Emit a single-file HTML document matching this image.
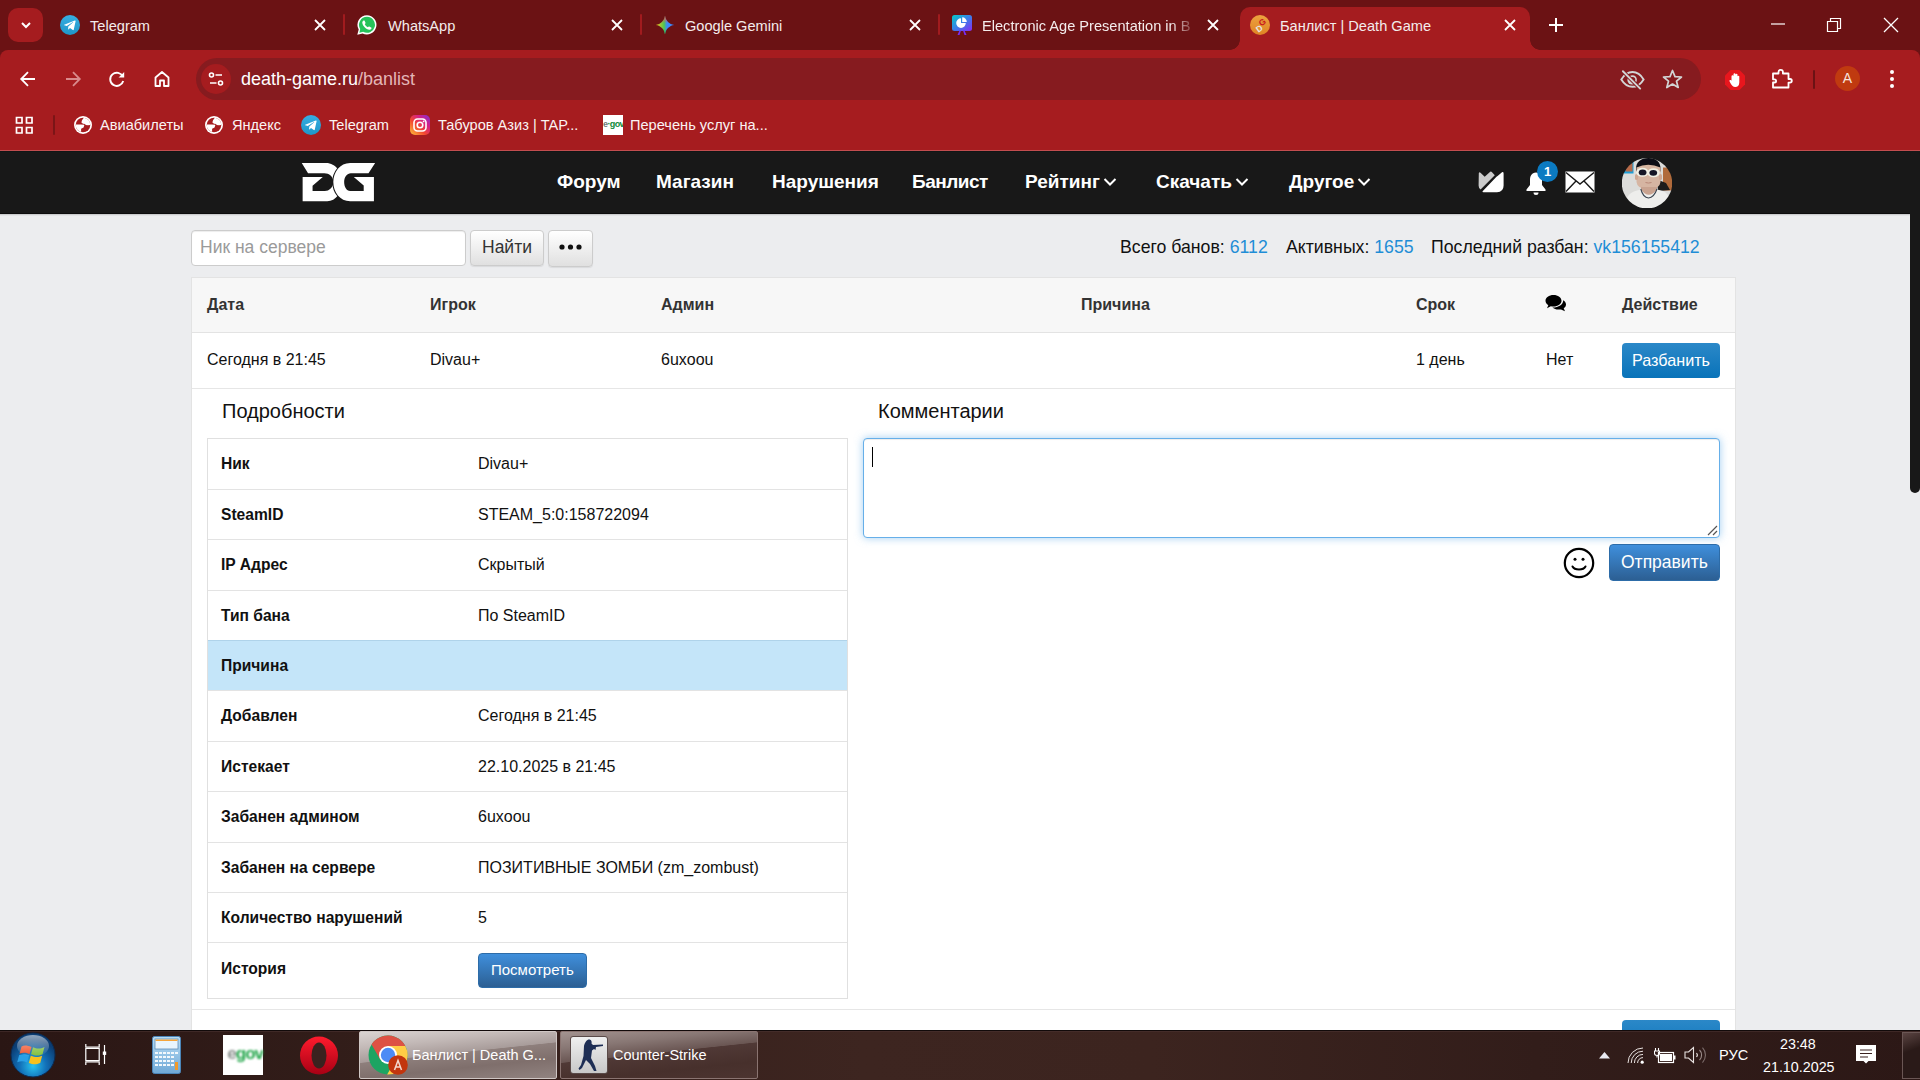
<!DOCTYPE html>
<html><head><meta charset="utf-8">
<style>
*{box-sizing:border-box;margin:0;padding:0}
html,body{width:1920px;height:1080px;overflow:hidden;background:#ECEDEF;font-family:"Liberation Sans",sans-serif}
.a{position:absolute}
.w{color:#fff}
#tabs{position:absolute;left:0;top:0;width:1920px;height:50px;background:#6B1214}
#toolbar{position:absolute;left:0;top:50px;width:1920px;height:101px;background:#A61C1F;border-radius:8px 8px 0 0;border-bottom:1px solid #C24D4F}
.tt{position:absolute;top:16px;font-size:14.6px;color:#F4ECEC;white-space:nowrap;line-height:20px}
.sep{position:absolute;top:14px;width:2px;height:21px;background:#A11B1E;border-radius:1px}
#nav{position:absolute;left:0;top:151px;width:1910px;height:63px;background:#181818;border-bottom:1px solid #0D0D0D;border-top:1px solid #111515;box-shadow:0 1px 0 #CBCCCE,0 2px 0 #E2E3E5}
.nv{position:absolute;top:170px;font-size:19px;font-weight:bold;color:#fff;white-space:nowrap;line-height:24px}
.bm{position:absolute;top:115px;font-size:14.6px;color:#FBF3F3;white-space:nowrap;line-height:20px}
#taskbar{position:absolute;left:0;top:1030px;width:1920px;height:50px;background:linear-gradient(90deg,#2A1614 0%,#331E1A 20%,#3D2520 45%,#3C241F 60%,#321D1A 80%,#2C1816 100%)}
.hd{position:absolute;top:294px;font-size:16px;font-weight:bold;color:#333;line-height:22px;white-space:nowrap}
.td{position:absolute;top:349px;font-size:16px;color:#111;line-height:22px;white-space:nowrap}
.btnb{border-radius:4px}
.lb{position:absolute;left:221px;font-size:15.6px;font-weight:bold;color:#111;line-height:22px;white-space:nowrap}
.vl{position:absolute;left:478px;font-size:16px;color:#111;line-height:22px;white-space:nowrap}
</style></head>
<body>
<!-- TAB STRIP -->
<div class="a" style="left:0;top:0;width:1920px;height:151px;background:#6B1214"></div>
<div id="tabs">
  <div class="a" style="left:8px;top:8px;width:35px;height:34px;border-radius:10px;background:#A51C1F"></div>
  <svg class="a" style="left:19px;top:18px" width="14" height="14" viewBox="0 0 14 14"><path d="M3 5 L7 9 L11 5" stroke="#fff" stroke-width="2" fill="none"/></svg>

  <svg class="a" style="left:60px;top:15px" width="20" height="20" viewBox="0 0 20 20"><defs><linearGradient id="tg" x1="0" y1="0" x2="0" y2="1"><stop offset="0" stop-color="#37AEE2"/><stop offset="1" stop-color="#1E96C8"/></linearGradient></defs><circle cx="10" cy="10" r="10" fill="url(#tg)"/><path d="M4.2 9.8L14.8 5.6C15.3 5.4 15.7 5.7 15.6 6.3L13.8 14.6C13.7 15.2 13.3 15.3 12.8 15L10 12.9L8.7 14.2C8.5 14.4 8.4 14.5 8.1 14.5L8.3 11.6L13.2 7.2C13.4 7 13.2 6.9 12.9 7.1L6.8 11L4.3 10.2C3.8 10.1 3.8 9.9 4.2 9.8Z" fill="#fff"/></svg>
  <div class="tt" style="left:90px">Telegram</div>
  <svg class="a" style="left:313px;top:18px" width="14" height="14" viewBox="0 0 14 14"><path d="M2 2L12 12M12 2L2 12" stroke="#fff" stroke-width="1.8"/></svg>
  <div class="sep" style="left:343px"></div>

  <svg class="a" style="left:356px;top:14px" width="22" height="22" viewBox="0 0 22 22"><path d="M11 1.2A9.6 9.6 0 0 0 2.7 15.6L1.3 20.8L6.6 19.4A9.6 9.6 0 1 0 11 1.2Z" fill="#fff"/><path d="M11 2.8A8 8 0 0 0 4.2 15L3.4 18.7L7.1 17.8A8 8 0 1 0 11 2.8Z" fill="#25C35A"/><path d="M7.8 6.5C8.2 6.4 8.5 6.5 8.7 6.9L9.5 8.8C9.6 9.1 9.5 9.4 9.3 9.6L8.8 10.2C9.5 11.6 10.5 12.6 11.9 13.3L12.5 12.7C12.7 12.5 13 12.4 13.3 12.6L15.1 13.4C15.5 13.6 15.6 13.9 15.5 14.3C15.2 15.3 14.3 15.9 13.3 15.8C10 15.4 6.7 12.1 6.3 8.8C6.2 7.8 6.8 6.8 7.8 6.5Z" fill="#fff"/></svg>
  <div class="tt" style="left:388px">WhatsApp</div>
  <svg class="a" style="left:610px;top:18px" width="14" height="14" viewBox="0 0 14 14"><path d="M2 2L12 12M12 2L2 12" stroke="#fff" stroke-width="1.8"/></svg>
  <div class="sep" style="left:640px"></div>

  <svg class="a" style="left:655px;top:15px" width="20" height="20" viewBox="0 0 20 20"><defs><linearGradient id="gm1" x1="0" y1="0.5" x2="1" y2="0.5"><stop offset="0" stop-color="#FFC61A"/><stop offset="0.45" stop-color="#4FC54F"/><stop offset="0.6" stop-color="#3D8BF2"/><stop offset="1" stop-color="#3A86FF"/></linearGradient><linearGradient id="gm2" x1="0" y1="0" x2="0" y2="1"><stop offset="0" stop-color="#F6485A"/><stop offset="0.4" stop-color="#F6485A" stop-opacity="0"/><stop offset="0.7" stop-color="#1FC45A" stop-opacity="0"/><stop offset="1" stop-color="#1FC45A"/></linearGradient></defs><path d="M10 0.8C10.6 5.6 14.4 9.4 19.2 10C14.4 10.6 10.6 14.4 10 19.2C9.4 14.4 5.6 10.6 0.8 10C5.6 9.4 9.4 5.6 10 0.8Z" fill="url(#gm1)"/><path d="M10 0.8C10.6 5.6 14.4 9.4 19.2 10C14.4 10.6 10.6 14.4 10 19.2C9.4 14.4 5.6 10.6 0.8 10C5.6 9.4 9.4 5.6 10 0.8Z" fill="url(#gm2)"/></svg>
<div class="tt" style="left:685px">Google Gemini</div>
  <svg class="a" style="left:908px;top:18px" width="14" height="14" viewBox="0 0 14 14"><path d="M2 2L12 12M12 2L2 12" stroke="#fff" stroke-width="1.8"/></svg>
  <div class="sep" style="left:938px"></div>

  <svg class="a" style="left:951px;top:14px" width="22" height="22" viewBox="0 0 22 22"><defs><linearGradient id="ea" x1="0" y1="0" x2="1" y2="1"><stop offset="0" stop-color="#06CBC6"/><stop offset="0.5" stop-color="#3A7FE8"/><stop offset="1" stop-color="#8A2BF2"/></linearGradient></defs><rect x="1" y="1" width="20" height="16" rx="2.5" fill="url(#ea)"/><path d="M6.5 21L8.5 16.5H10L8.5 21ZM15.5 21L13.5 16.5H12L13.5 21Z" fill="#7A2CF5"/><path d="M10 4.3A4.8 4.8 0 1 0 14.8 9.1H10Z" fill="#fff"/><path d="M11.2 3.3V7.9H15.8A4.6 4.6 0 0 0 11.2 3.3Z" fill="#fff"/></svg>
<div class="tt" style="left:982px;width:215px;overflow:hidden;-webkit-mask-image:linear-gradient(90deg,#000 88%,transparent 100%)">Electronic Age Presentation in B</div>
  <svg class="a" style="left:1206px;top:18px" width="14" height="14" viewBox="0 0 14 14"><path d="M2 2L12 12M12 2L2 12" stroke="#fff" stroke-width="1.8"/></svg>

  <!-- active tab -->
  <div class="a" style="left:1240px;top:7px;width:290px;height:43px;background:#A51C1F;border-radius:10px 10px 0 0"></div>
<div class="a" style="left:1230px;top:40px;width:10px;height:10px;background:radial-gradient(circle at 0 0,transparent 9.5px,#A51C1F 10px)"></div>
<div class="a" style="left:1530px;top:40px;width:10px;height:10px;background:radial-gradient(circle at 100% 0,transparent 9.5px,#A51C1F 10px)"></div>
  <svg class="a" style="left:1250px;top:15px" width="20" height="20" viewBox="0 0 20 20"><defs><linearGradient id="dgf" x1="0" y1="0" x2="0" y2="1"><stop offset="0" stop-color="#EDA23F"/><stop offset="1" stop-color="#DF8424"/></linearGradient></defs><circle cx="10" cy="10" r="10" fill="url(#dgf)"/><g transform="rotate(-35 10 10)"><text x="4.2" y="15.5" font-family="Liberation Sans" font-weight="bold" font-size="8.5" fill="#E6E6E6">D</text><text x="10.2" y="12" font-family="Liberation Sans" font-weight="bold" font-size="8.5" fill="#C8171D">G</text></g></svg>
  <div class="tt" style="left:1280px">Банлист | Death Game</div>
  <svg class="a" style="left:1503px;top:18px" width="14" height="14" viewBox="0 0 14 14"><path d="M2 2L12 12M12 2L2 12" stroke="#fff" stroke-width="1.8"/></svg>
  <svg class="a" style="left:1547px;top:16px" width="18" height="18" viewBox="0 0 18 18"><path d="M9 2V16M2 9H16" stroke="#fff" stroke-width="2"/></svg>

  <svg class="a" style="left:1770px;top:18px" width="16" height="14"><path d="M1 6H15" stroke="#fff" stroke-width="1.2"/></svg>
  <svg class="a" style="left:1826px;top:17px" width="16" height="16"><path d="M1.5 4.5H11.5V14.5H1.5Z M4.5 4.5V1.5H14.5V11.5H11.5" stroke="#fff" stroke-width="1.2" fill="none"/></svg>
  <svg class="a" style="left:1883px;top:17px" width="16" height="16"><path d="M1 1L15 15M15 1L1 15" stroke="#fff" stroke-width="1.3"/></svg>
</div>

<!-- TOOLBAR + BOOKMARKS -->
<div id="toolbar"></div>
<!-- Omnibox -->
<div class="a" style="left:196px;top:58px;width:1505px;height:42px;border-radius:21px;background:#861B1F"></div>

<!-- toolbar icons -->
<svg class="a" style="left:18px;top:69px" width="20" height="20" viewBox="0 0 20 20"><path d="M17 10H3.5M10 3.2L3.2 10L10 16.8" stroke="#fff" stroke-width="1.8" fill="none"/></svg>
<svg class="a" style="left:63px;top:69px" width="20" height="20" viewBox="0 0 20 20"><path d="M3 10H16.5M10 3.2L16.8 10L10 16.8" stroke="#D98A8C" stroke-width="1.8" fill="none"/></svg>
<svg class="a" style="left:107px;top:69px" width="20" height="20" viewBox="0 0 20 20"><path d="M15.8 7.5A6.6 6.6 0 1 0 16.2 12" stroke="#fff" stroke-width="1.9" fill="none"/><path d="M17.2 3V8.6H11.6Z" fill="#fff"/></svg>
<svg class="a" style="left:152px;top:69px" width="20" height="20" viewBox="0 0 20 20"><path d="M3.5 17V8.5L10 3L16.5 8.5V17H12V11.5H8V17Z" stroke="#fff" stroke-width="1.8" fill="none" stroke-linejoin="round"/></svg>
<!-- site info -->
<div class="a" style="left:201px;top:64px;width:30px;height:30px;border-radius:50%;background:#A51C1F"></div>
<svg class="a" style="left:206px;top:69px" width="20" height="20" viewBox="0 0 20 20"><circle cx="5.5" cy="6" r="2" stroke="#fff" stroke-width="1.6" fill="none"/><path d="M9.5 6H16M4 14H10.5" stroke="#fff" stroke-width="1.6"/><circle cx="14.5" cy="14" r="2" stroke="#fff" stroke-width="1.6" fill="none"/></svg>
<div class="a" style="left:241px;top:68px;font-size:18px;line-height:22px;color:#fff;white-space:nowrap">death-game.ru<span style="color:#E3B6B7">/banlist</span></div>
<!-- eye slash -->
<svg class="a" style="left:1610px;top:60px" width="45" height="40" viewBox="0 0 45 40"><defs><clipPath id="eyl"><path d="M0 0H1.65L41.65 40H0Z"/></clipPath><clipPath id="eyr"><path d="M1.65 0H45V40H41.65Z"/></clipPath></defs><path d="M11.3 19.4C14.5 14.2 18 12 22.5 12S30.5 14.2 33.6 19.4C30.5 24.6 27 26.8 22.5 26.8S14.5 24.6 11.3 19.4Z" stroke="#D2D5D5" stroke-width="1.9" fill="none"/><circle cx="22" cy="20" r="4.6" fill="#D2D5D5" clip-path="url(#eyl)"/><circle cx="22.5" cy="19.7" r="3.6" stroke="#D2D5D5" stroke-width="1.6" fill="none" clip-path="url(#eyr)"/><path d="M12.9 11.25L30.2 28.6" stroke="#861B1F" stroke-width="3.8"/><path d="M12.9 11.25L30.2 28.6" stroke="#D2D5D5" stroke-width="1.9" stroke-linecap="round"/></svg>
<svg class="a" style="left:1662px;top:69px" width="21" height="20" viewBox="0 0 21 20"><path d="M10.5 1.5L13 7.6L19.5 8L14.5 12.2L16.2 18.5L10.5 15L4.8 18.5L6.5 12.2L1.5 8L8 7.6Z" stroke="#D2D5D5" stroke-width="1.7" fill="none" stroke-linejoin="round"/></svg>
<!-- adblock -->
<svg class="a" style="left:1724px;top:69px" width="22" height="22" viewBox="0 0 22 22"><path d="M6.5 1H15.5L21 6.5V15.5L15.5 21H6.5L1 15.5V6.5Z" fill="#E8161D"/><path d="M7.5 12V7.3a1 1 0 0 1 2 0V11V5.3a1 1 0 0 1 2 0V11V5.8a1 1 0 0 1 2 0V11V7.3a1 1 0 0 1 1.8 0V13.5C15.3 16.5 13.6 18 11.2 18C9 18 8 16.8 6.8 14.8L5.5 12.3a1 1 0 0 1 1.7-1Z" fill="#fff"/></svg>
<svg class="a" style="left:1770px;top:68px" width="24" height="22" viewBox="0 0 24 22"><path d="M3 5.5H8.5V4a2.2 2.2 0 0 1 4.4 0V5.5H18.5V11H20a1.8 1.8 0 0 1 0 3.6H18.5V19.5H3V14.5H4.5a1.6 1.6 0 0 0 0-3.2H3Z" stroke="#fff" stroke-width="1.8" fill="none" stroke-linejoin="round"/></svg>
<div class="a" style="left:1813px;top:70px;width:2px;height:19px;background:#6B1214;border-radius:1px"></div>
<div class="a" style="left:1835px;top:66px;width:25px;height:25px;border-radius:50%;background:#C03A10;color:#F6E3DA;font-size:14px;line-height:25px;text-align:center">A</div>
<svg class="a" style="left:1886px;top:68px" width="12" height="22" viewBox="0 0 12 22"><circle cx="6" cy="4" r="2" fill="#fff"/><circle cx="6" cy="11" r="2" fill="#fff"/><circle cx="6" cy="18" r="2" fill="#fff"/></svg>

<!-- bookmarks bar -->
<svg class="a" style="left:15px;top:116px" width="19" height="19" viewBox="0 0 19 19"><path d="M1.5 1.5H7V7H1.5ZM11.5 1.5H17V7H11.5ZM1.5 11.5H7V17H1.5ZM11.5 11.5H17V17H11.5Z" stroke="#fff" stroke-width="1.7" fill="none"/></svg>
<div class="a" style="left:53px;top:115px;width:2px;height:20px;background:#7B1517;border-radius:1px"></div>
<svg class="a" style="left:68px;top:110px" width="30" height="30" viewBox="0 0 30 30"><circle cx="15" cy="15" r="9" fill="#fff"/><circle cx="15" cy="15" r="7.3" fill="#A51C1F"/><path d="M15.8 7.7L14 10.3L13.4 12.5L15 13.75L17.2 14.1L17.5 15L20 15.3L22.3 15A7.3 7.3 0 0 0 15.8 7.7Z" fill="#fff"/><path d="M7.7 14.4L12.5 14.4L16.4 14.8L15.6 17.5L13.1 18.75L13.1 22A7.3 7.3 0 0 1 7.7 14.4Z" fill="#fff"/></svg>
<div class="bm" style="left:100px">Авиабилеты</div>
<svg class="a" style="left:199px;top:110px" width="30" height="30" viewBox="0 0 30 30"><circle cx="15" cy="15" r="9" fill="#fff"/><circle cx="15" cy="15" r="7.3" fill="#A51C1F"/><path d="M15.8 7.7L14 10.3L13.4 12.5L15 13.75L17.2 14.1L17.5 15L20 15.3L22.3 15A7.3 7.3 0 0 0 15.8 7.7Z" fill="#fff"/><path d="M7.7 14.4L12.5 14.4L16.4 14.8L15.6 17.5L13.1 18.75L13.1 22A7.3 7.3 0 0 1 7.7 14.4Z" fill="#fff"/></svg>
<div class="bm" style="left:232px">Яндекс</div>
<svg class="a" style="left:301px;top:115px" width="20" height="20" viewBox="0 0 20 20"><defs><linearGradient id="tg2" x1="0" y1="0" x2="0" y2="1"><stop offset="0" stop-color="#37AEE2"/><stop offset="1" stop-color="#1E96C8"/></linearGradient></defs><circle cx="10" cy="10" r="10" fill="url(#tg2)"/><path d="M4.2 9.8L14.8 5.6C15.3 5.4 15.7 5.7 15.6 6.3L13.8 14.6C13.7 15.2 13.3 15.3 12.8 15L10 12.9L8.7 14.2C8.5 14.4 8.4 14.5 8.1 14.5L8.3 11.6L13.2 7.2C13.4 7 13.2 6.9 12.9 7.1L6.8 11L4.3 10.2C3.8 10.1 3.8 9.9 4.2 9.8Z" fill="#fff"/></svg>
<div class="bm" style="left:329px">Telegram</div>
<div class="a" style="left:410px;top:115px;width:20px;height:20px;border-radius:5px;background:linear-gradient(45deg,#FEC33B 0%,#F3472F 40%,#D21F8B 70%,#7A34D6 100%)"></div>
<svg class="a" style="left:410px;top:115px" width="20" height="20" viewBox="0 0 20 20"><rect x="4" y="4" width="12" height="12" rx="3.5" stroke="#fff" stroke-width="1.6" fill="none"/><circle cx="10" cy="10" r="2.8" stroke="#fff" stroke-width="1.6" fill="none"/><circle cx="13.6" cy="6.4" r="0.9" fill="#fff"/></svg>
<div class="bm" style="left:438px">Табуров Азиз | TAP...</div>
<div class="a" style="left:603px;top:115px;width:20px;height:20px;background:#fff"></div>
<div class="a" style="left:603px;top:119px;width:20px;font-size:9px;line-height:10px;font-weight:bold;color:#0E8A3A;text-align:right;letter-spacing:-0.6px;overflow:hidden;white-space:nowrap"><span style="color:#6F7A7A">e</span>·gov</div>
<div class="bm" style="left:630px">Перечень услуг на...</div>

<div id="nav"></div>
<!-- logo -->
<svg class="a" style="left:290px;top:150px" width="100" height="65" viewBox="0 0 1662 1080">
<path d="M195,215 L600,215 C760,215 870,380 870,530 C870,700 760,850 620,850 L210,850 L210,450 L545,450 L375,595 L375,680 L580,680 C650,680 720,620 720,530 C720,440 650,385 570,385 L300,385 Z" fill="#fff"/>
<path d="M1415,215 L1000,215 C830,215 720,370 720,530 C720,700 830,850 1000,850 L1395,850 L1395,450 L1060,450 L1225,590 L1225,680 L1000,680 C940,680 900,610 900,530 C900,450 950,385 1010,385 L1305,385 Z" fill="#fff" stroke="#181818" stroke-width="34" paint-order="stroke"/>
</svg>
<div class="nv" style="left:557px">Форум</div>
<div class="nv" style="left:656px">Магазин</div>
<div class="nv" style="left:772px">Нарушения</div>
<div class="nv" style="left:912px;letter-spacing:-0.5px">Банлист</div>
<div class="nv" style="left:1025px">Рейтинг</div>
<svg class="a" style="left:1103px;top:176px" width="14" height="12" viewBox="0 0 14 12"><path d="M1.5 3L7 8.5L12.5 3" stroke="#fff" stroke-width="2" fill="none"/></svg>
<div class="nv" style="left:1156px">Скачать</div>
<svg class="a" style="left:1235px;top:176px" width="14" height="12" viewBox="0 0 14 12"><path d="M1.5 3L7 8.5L12.5 3" stroke="#fff" stroke-width="2" fill="none"/></svg>
<div class="nv" style="left:1289px">Другое</div>
<svg class="a" style="left:1357px;top:176px" width="14" height="12" viewBox="0 0 14 12"><path d="M1.5 3L7 8.5L12.5 3" stroke="#fff" stroke-width="2" fill="none"/></svg>
<!-- nav icons -->
<svg class="a" style="left:1474px;top:166px" width="36" height="32" viewBox="0 0 36 32"><path d="M4.8 7.2Q5.3 5.6 6.5 6.8L10.7 10.8L16.2 5.8Q17 5.2 17.8 5.9L20.8 9.2L6.6 23.6Q4.6 22.5 4.6 19.5Z" fill="#CBCBCB"/><path d="M8.6 25.2L22 11.2Q22.8 10.5 23.6 10L28 6.3Q29.5 5.5 29.6 7.5V19.5Q29.6 26 23 26.2H9.5Q8 26 8.6 25.2Z" fill="#fff"/></svg>
<svg class="a" style="left:1525px;top:170px" width="22" height="26" viewBox="0 0 22 26"><path d="M11 2.5C6.5 2.5 5 6.5 5 10V15L1.5 19.5V21H20.5V19.5L17 15V10C17 6.5 15.5 2.5 11 2.5Z" fill="#fff"/><path d="M8.5 22.5a2.5 2.5 0 0 0 5 0Z" fill="#fff"/></svg>
<div class="a" style="left:1537px;top:161px;width:21px;height:21px;border-radius:50%;background:#0B7AC1;color:#fff;font-size:13px;font-weight:bold;line-height:21px;text-align:center">1</div>
<svg class="a" style="left:1565px;top:171px" width="30" height="22" viewBox="0 0 30 22"><rect x="0.5" y="0.5" width="29" height="21" fill="#fff"/><path d="M1 1.5L15 13L29 1.5M1 20.5L11 10M29 20.5L19 10" stroke="#181818" stroke-width="1.4" fill="none"/></svg>
<!-- avatar -->
<svg class="a" style="left:1622px;top:158px" width="50" height="50" viewBox="0 0 50 50">
<defs><clipPath id="av"><circle cx="25" cy="25.2" r="25.2"/></clipPath><filter id="avb"><feGaussianBlur stdDeviation="0.45"/></filter></defs>
<g clip-path="url(#av)"><g filter="url(#avb)">
<rect width="50" height="50" fill="#DCDCDA"/>
<rect x="2" y="3.5" width="9.5" height="12" fill="#1E9ED6"/>
<rect x="3.5" y="5" width="7" height="8.5" fill="#B66A4A"/>
<rect x="41" y="9.5" width="10" height="23" fill="#B06A3A"/>
<path d="M35 21.5L44 25L48 32L36 33Z" fill="#1B1B1B"/>
<path d="M14 11C14 4 18.5 0 26.5 0S38.5 4 38.5 11V13.5H14Z" fill="#0F0F12"/>
<path d="M14.5 9.5Q26 4 38.5 9.5V24Q38 31 26.5 31.5Q15 31 14.5 24Z" fill="#D6B5A2"/>
<rect x="13" y="16" width="3" height="6" rx="1.5" fill="#CFA792"/><rect x="37" y="16" width="3" height="6" rx="1.5" fill="#CFA792"/>
<path d="M19 29H35V39H19Z" fill="#C9A390"/>
<path d="M3 50C3 38 8 33.5 19 31.5Q26.5 42 35 31.5C44 33 49 37 50 50Z" fill="#EEEEEC"/>
<path d="M18.8 31Q21 39.5 26.5 40Q32 39.5 35 31" stroke="#3B4450" stroke-width="1.1" fill="none"/>
<ellipse cx="20.4" cy="14.3" rx="6.3" ry="4.5" fill="#F1EFE4"/><ellipse cx="31.6" cy="14.7" rx="6.3" ry="4.5" fill="#F1EFE4"/>
<ellipse cx="20.6" cy="14.4" rx="3.9" ry="2.9" fill="#151828"/><ellipse cx="31.3" cy="14.8" rx="3.9" ry="2.9" fill="#151828"/>
<path d="M23.5 24.5Q26.5 25.6 29.5 24.5" stroke="#B98878" stroke-width="1" fill="none"/>
</g></g></svg>
<!-- scrollbar -->
<div class="a" style="left:1910px;top:151px;width:10px;height:342px;background:#181818;border-radius:0 0 5px 5px"></div>
<div class="a" style="left:1910px;top:151px;width:10px;height:8px;background:#181818;border-radius:5px 5px 0 0"></div>

<!-- search -->
<div class="a" style="left:191px;top:230px;width:275px;height:36px;background:#fff;border:1px solid #CCCCCC;border-radius:4px;box-shadow:inset 0 1px 1px rgba(0,0,0,.075)"></div>
<div class="a" style="left:200px;top:236px;font-size:17.5px;line-height:22px;color:#9A9A9A;white-space:nowrap">Ник на сервере</div>
<div class="a" style="left:470px;top:230px;width:74px;height:36px;background:linear-gradient(#FFFFFF,#E0E0E0);border:1px solid #CCCCCC;border-radius:4px;box-shadow:0 1px 1px rgba(0,0,0,.08)"></div>
<div class="a" style="left:482px;top:236px;font-size:17.5px;line-height:22px;color:#333;white-space:nowrap">Найти</div>
<div class="a" style="left:548px;top:230px;width:45px;height:37px;background:linear-gradient(#FFFFFF,#E0E0E0);border:1px solid #CCCCCC;border-radius:4px;box-shadow:0 1px 1px rgba(0,0,0,.08)"></div>
<svg class="a" style="left:558px;top:242px" width="25" height="10" viewBox="0 0 25 10"><circle cx="4" cy="5" r="2.6" fill="#111"/><circle cx="12.5" cy="5" r="2.6" fill="#111"/><circle cx="21" cy="5" r="2.6" fill="#111"/></svg>

<!-- stats -->
<div class="a" style="left:1120px;top:236px;font-size:17.7px;line-height:22px;color:#111;white-space:nowrap">Всего банов: <span style="color:#1F8DD6">6112</span></div>
<div class="a" style="left:1286px;top:236px;font-size:17.7px;line-height:22px;color:#111;white-space:nowrap">Активных: <span style="color:#1F8DD6">1655</span></div>
<div class="a" style="left:1431px;top:236px;font-size:17.7px;line-height:22px;color:#111;white-space:nowrap">Последний разбан: <span style="color:#1F8DD6">vk156155412</span></div>

<!-- main table container -->
<div class="a" style="left:191px;top:277px;width:1545px;height:760px;background:#fff;border:1px solid #E3E3E3"></div>
<div class="a" style="left:192px;top:278px;width:1543px;height:55px;background:#F7F7F7;border-bottom:1px solid #E3E3E3"></div>
<div class="a" style="left:192px;top:388px;width:1543px;height:1px;background:#E6E6E6"></div>
<div class="a" style="left:192px;top:1009px;width:1543px;height:1px;background:#E6E6E6"></div>
<div class="a hd" style="left:207px">Дата</div>
<div class="a hd" style="left:430px">Игрок</div>
<div class="a hd" style="left:661px">Админ</div>
<div class="a hd" style="left:1081px">Причина</div>
<div class="a hd" style="left:1416px">Срок</div>
<div class="a hd" style="left:1622px">Действие</div>
<svg class="a" style="left:1545px;top:294px" width="22" height="18" viewBox="0 0 22 18"><path d="M8.5 1C4 1 0.5 3.5 0.5 6.8C0.5 8.6 1.6 10.2 3.3 11.3L2 14.2L5.8 12.3C6.7 12.5 7.6 12.6 8.5 12.6C13 12.6 16.5 10 16.5 6.8S13 1 8.5 1Z" fill="#000"/><path d="M18.2 6.2C19.8 7.2 21 8.7 21 10.4C21 11.9 20.1 13.3 18.7 14.3L20 17.2L16 15.4C15.2 15.6 14.4 15.6 13.5 15.6C11 15.6 8.8 14.8 7.4 13.5C13.5 13.6 18.3 10.5 18.2 6.2Z" fill="#000"/></svg>
<div class="a td" style="left:207px">Сегодня в 21:45</div>
<div class="a td" style="left:430px">Divau+</div>
<div class="a td" style="left:661px">6uxoou</div>
<div class="a td" style="left:1416px">1 день</div>
<div class="a td" style="left:1546px">Нет</div>
<div class="a btnb" style="left:1622px;top:343px;width:98px;height:35px;background:linear-gradient(#2B88C8,#0973B9);"></div>
<div class="a" style="left:1632px;top:349px;font-size:16.2px;line-height:22px;color:#fff;white-space:nowrap">Разбанить</div>
<div class="a" style="left:222px;top:399px;font-size:20px;line-height:24px;color:#111;white-space:nowrap">Подробности</div>
<div class="a" style="left:878px;top:399px;font-size:20px;line-height:24px;color:#111;white-space:nowrap">Комментарии</div>


<!-- details table -->
<div class="a" style="left:207px;top:438px;width:641px;height:561px;border:1px solid #E0E0E0;background:#fff"></div>
<div class="lb" style="top:453px">Ник</div>
<div class="vl" style="top:453px">Divau+</div>
<div class="a" style="left:208px;top:489px;width:639px;height:1px;background:#E3E3E3"></div>
<div class="lb" style="top:504px">SteamID</div>
<div class="vl" style="top:504px">STEAM_5:0:158722094</div>
<div class="a" style="left:208px;top:539px;width:639px;height:1px;background:#E3E3E3"></div>
<div class="lb" style="top:554px">IP Адрес</div>
<div class="vl" style="top:554px">Скрытый</div>
<div class="a" style="left:208px;top:590px;width:639px;height:1px;background:#E3E3E3"></div>
<div class="lb" style="top:605px">Тип бана</div>
<div class="vl" style="top:605px">По SteamID</div>
<div class="a" style="left:208px;top:640px;width:639px;height:1px;background:#E3E3E3"></div>
<div class="a" style="left:208px;top:640px;width:639px;height:51px;background:#C4E5F9;border-top:1px solid #AFD3EA;border-bottom:1px solid #AFD3EA"></div>
<div class="lb" style="top:655px">Причина</div>
<div class="a" style="left:208px;top:690px;width:639px;height:1px;background:#E3E3E3"></div>
<div class="lb" style="top:705px">Добавлен</div>
<div class="vl" style="top:705px">Сегодня в 21:45</div>
<div class="a" style="left:208px;top:741px;width:639px;height:1px;background:#E3E3E3"></div>
<div class="lb" style="top:756px">Истекает</div>
<div class="vl" style="top:756px">22.10.2025 в 21:45</div>
<div class="a" style="left:208px;top:791px;width:639px;height:1px;background:#E3E3E3"></div>
<div class="lb" style="top:806px">Забанен админом</div>
<div class="vl" style="top:806px">6uxoou</div>
<div class="a" style="left:208px;top:842px;width:639px;height:1px;background:#E3E3E3"></div>
<div class="lb" style="top:857px">Забанен на сервере</div>
<div class="vl" style="top:857px">ПОЗИТИВНЫЕ ЗОМБИ (zm_zombust)</div>
<div class="a" style="left:208px;top:892px;width:639px;height:1px;background:#E3E3E3"></div>
<div class="lb" style="top:907px">Количество нарушений</div>
<div class="vl" style="top:907px">5</div>
<div class="a" style="left:208px;top:942px;width:639px;height:1px;background:#E3E3E3"></div>
<div class="lb" style="top:958px">История</div>
<div class="a btnb" style="left:478px;top:953px;width:109px;height:35px;background:linear-gradient(#3F8FDC,#2C5F93);border:1px solid #2D6CA8"></div>
<div class="a" style="left:491px;top:960px;font-size:15px;line-height:20px;color:#fff;white-space:nowrap">Посмотреть</div>
<!-- comments -->
<div class="a" style="left:863px;top:438px;width:857px;height:100px;background:#fff;border:1px solid #66AFE9;border-radius:4px;box-shadow:inset 0 1px 1px rgba(0,0,0,.075),0 0 8px rgba(102,175,233,.6)"></div>
<div class="a" style="left:872px;top:447px;width:1px;height:20px;background:#000"></div>
<svg class="a" style="left:1707px;top:525px" width="11" height="11" viewBox="0 0 11 11"><path d="M1 10L10 1M6 10L10 6" stroke="#555" stroke-width="1.2"/></svg>
<svg class="a" style="left:1562px;top:546px" width="34" height="34" viewBox="0 0 34 34"><circle cx="17" cy="17" r="14.2" stroke="#000" stroke-width="2.2" fill="none"/><circle cx="13" cy="13.3" r="1.5" fill="#000"/><circle cx="21" cy="13.3" r="1.5" fill="#000"/><path d="M10.5 20.5C12.5 24.5 21.5 24.5 23.5 20.5" stroke="#000" stroke-width="2" fill="none" stroke-linecap="round"/></svg>
<div class="a btnb" style="left:1609px;top:544px;width:111px;height:37px;background:linear-gradient(#3F8FDC,#2C5F93);border:1px solid #2D6CA8"></div>
<div class="a" style="left:1621px;top:551px;font-size:17.5px;line-height:22px;color:#fff;white-space:nowrap">Отправить</div>
<!-- next row button partially visible -->
<div class="a btnb" style="left:1622px;top:1020px;width:98px;height:35px;background:linear-gradient(#2B88C8,#0973B9);"></div>
<div id="taskbar"></div>
<div class="a" style="left:0;top:1030px;width:1920px;height:1px;background:#120A0A"></div>
<div class="a" style="left:0;top:1031px;width:1920px;height:1px;background:#4A3230;opacity:.6"></div>
<!-- start orb -->
<svg class="a" style="left:10px;top:1032px" width="46" height="46" viewBox="0 0 46 46">
<defs><radialGradient id="orb" cx="50%" cy="75%" r="60%"><stop offset="0" stop-color="#29C3F0"/><stop offset="0.5" stop-color="#1270B8"/><stop offset="1" stop-color="#0B3D73"/></radialGradient>
<linearGradient id="orbg" x1="0" y1="0" x2="0" y2="1"><stop offset="0" stop-color="#fff" stop-opacity=".55"/><stop offset="1" stop-color="#fff" stop-opacity="0"/></linearGradient></defs>
<circle cx="23" cy="23" r="22" fill="url(#orb)" stroke="#0A2C55" stroke-width="1"/>
<path d="M11.5 14.5C14 13 17 13.2 21.5 15L19.5 22C15.5 20.5 13 20.5 9.5 21.8Z" fill="#F0522A"/>
<path d="M23 15.2C27 17 30 17 34.5 15L32.5 22.3C28.5 24 26 24 21 22.3Z" fill="#7FBF3A"/>
<path d="M9.2 23C12.7 21.8 15 21.8 19.2 23.3L17.2 30.5C13.5 29 11 29 7.2 30.3Z" fill="#2AA0E6"/>
<path d="M20.8 23.8C25.5 25.5 28 25.5 32.2 23.8L30.2 31C26 32.8 23.5 32.8 18.8 31Z" fill="#F9C11E"/>
<ellipse cx="23" cy="14" rx="16" ry="11" fill="url(#orbg)"/>
</svg>
<!-- task view -->
<svg class="a" style="left:85px;top:1044px" width="22" height="21" viewBox="0 0 22 21"><path d="M0.8 0V3.2H14.2V0M0.8 21V17.8H14.2V21M0.8 4.5H14.2V16.5H0.8Z" stroke="#fff" stroke-width="1.2" fill="none"/><path d="M19.5 1V20" stroke="#fff" stroke-width="1.2"/><rect x="17.8" y="7.5" width="3.4" height="3.4" fill="#fff"/></svg>
<!-- calculator -->
<svg class="a" style="left:152px;top:1036px" width="29" height="38" viewBox="0 0 29 38">
<defs><linearGradient id="calc" x1="0" y1="0" x2="0" y2="1"><stop offset="0" stop-color="#B8DDF5"/><stop offset="1" stop-color="#6FA8D6"/></linearGradient></defs>
<rect x="0.5" y="0.5" width="28" height="37" rx="2" fill="url(#calc)" stroke="#4B85B8"/>
<rect x="3" y="3" width="23" height="10" fill="#E9F5FD" stroke="#5F8DB5" stroke-width=".8"/>
<rect x="3.5" y="3.5" width="22" height="1.5" fill="#F6A53A"/>
<g fill="#F2F8FC"><rect x="3" y="16" width="3" height="2"/><rect x="7" y="16" width="3" height="2"/><rect x="11" y="16" width="3" height="2"/><rect x="15" y="16" width="3" height="2"/><rect x="19" y="16" width="3" height="2"/><rect x="23" y="16" width="3" height="2"/>
<rect x="3" y="20" width="3" height="2"/><rect x="7" y="20" width="3" height="2"/><rect x="11" y="20" width="3" height="2"/><rect x="15" y="20" width="3" height="2"/><rect x="19" y="20" width="3" height="2"/>
<rect x="3" y="24" width="3" height="2"/><rect x="7" y="24" width="3" height="2"/><rect x="11" y="24" width="3" height="2"/><rect x="15" y="24" width="3" height="2"/><rect x="19" y="24" width="3" height="2"/>
<rect x="3" y="28" width="3" height="2"/><rect x="7" y="28" width="3" height="2"/><rect x="11" y="28" width="3" height="2"/><rect x="15" y="28" width="3" height="2"/><rect x="19" y="28" width="3" height="2"/></g>
<rect x="23" y="26" width="3" height="8" fill="#F09A2C"/>
</svg>
<!-- egov -->
<div class="a" style="left:223px;top:1035px;width:40px;height:40px;background:#fff"></div>
<div class="a" style="left:223px;top:1044px;width:40px;font-size:17px;line-height:20px;font-weight:bold;color:#22A64A;text-align:right;letter-spacing:-1px;filter:blur(0.8px);white-space:nowrap;overflow:hidden"><span style="color:#8A8F8C">e</span>gov</div>
<!-- opera -->
<svg class="a" style="left:299px;top:1036px" width="40" height="39" viewBox="0 0 40 39">
<defs><linearGradient id="op" x1="0" y1="0" x2="0" y2="1"><stop offset="0" stop-color="#FF1B2D"/><stop offset="1" stop-color="#A70014"/></linearGradient></defs>
<ellipse cx="20" cy="19.5" rx="19" ry="19" fill="url(#op)"/>
<ellipse cx="20" cy="19.5" rx="7.5" ry="13" fill="#3A221F"/>
</svg>
<!-- chrome task (active) -->
<div class="a" style="left:359px;top:1031px;width:198px;height:48px;border:1px solid #CFC6C4;border-radius:2px;background:linear-gradient(174deg,#DAD4D2 0%,#C2B8B6 25%,#A89C9A 46%,#8E7F7C 47%,#7F6F6C 70%,#918380 100%)"></div>
<svg class="a" style="left:368px;top:1035px" width="42" height="42" viewBox="0 0 42 42">
<circle cx="20" cy="20" r="19.5" fill="#1DA462"/>
<path d="M20 20L20 11L37.3 11A19.5 19.5 0 0 0 3.56 9.52L12.21 24.5Z" fill="#DD5144"/>
<path d="M20 20L20 11L37.3 11A19.5 19.5 0 0 1 19.14 39.48L27.79 24.5Z" fill="#FFCD46"/>
<circle cx="20" cy="20" r="9" fill="#fff"/><circle cx="20" cy="20" r="7.2" fill="#4C8BF5"/>
<circle cx="30" cy="30" r="9.8" fill="#C2350E"/>
<path d="M26.5 35L30 25.5L33.5 35M27.6 32H32.4" stroke="#F4D7CC" stroke-width="1.5" fill="none"/>
</svg>
<div class="a" style="left:412px;top:1045px;font-size:14.5px;line-height:20px;color:#fff;white-space:nowrap">Банлист | Death G...</div>
<!-- CS task -->
<div class="a" style="left:560px;top:1031px;width:198px;height:48px;border:1px solid #8A7471;border-radius:2px;background:linear-gradient(174deg,#A39390 0%,#887774 25%,#6A5653 46%,#503936 47%,#47302C 75%,#4C3430 100%)"></div>
<div class="a" style="left:570px;top:1036px;width:38px;height:38px;border-radius:3px;background:linear-gradient(#F0F0F0,#C8C8C8);border:1px solid #5A4A48"></div>
<svg class="a" style="left:570px;top:1036px" width="38" height="38" viewBox="0 0 38 38"><path d="M19 3.5C21.5 3.5 22 6 21.5 7.5L23 9L33 8.5V10L26 11L25.5 14L24 13L22 14.5L21 22L25 30L26.5 35H24L20 28L16 24L12 32L9.5 34L8.5 32.5L11 29L13.5 20L14 10C15 6 17 3.5 19 3.5Z" fill="#1E2E55"/></svg>
<div class="a" style="left:613px;top:1045px;font-size:14.5px;line-height:20px;color:#fff;white-space:nowrap">Counter-Strike</div>
<!-- tray -->
<svg class="a" style="left:1599px;top:1051px" width="11" height="8" viewBox="0 0 11 8"><path d="M0 7.5L5.5 1L11 7.5Z" fill="#E8E8F0"/></svg>
<svg class="a" style="left:1627px;top:1047px" width="18" height="17" viewBox="0 0 18 17"><path d="M1 16A15 15 0 0 1 16 1M4.2 16A11.8 11.8 0 0 1 16 4.2M7.4 16A8.6 8.6 0 0 1 16 7.4M10.6 16A5.4 5.4 0 0 1 16 10.6" stroke="#E8E2E0" stroke-width="1" fill="none"/><circle cx="15.2" cy="15.2" r="1.6" fill="#fff"/></svg>
<svg class="a" style="left:1654px;top:1047px" width="22" height="17" viewBox="0 0 22 17"><path d="M1.5 1V4M4.5 1V4M0.5 4H5.5V6.5C5.5 8 4 8.5 3 8.5S0.5 8 0.5 6.5Z M3 8.5V10.5" stroke="#fff" stroke-width="1.1" fill="none"/><rect x="4.5" y="5.5" width="15" height="10" stroke="#fff" stroke-width="1.2" fill="none"/><rect x="6" y="7" width="12" height="7" fill="#fff"/><rect x="19.5" y="8.5" width="2" height="4" fill="#fff"/></svg>
<svg class="a" style="left:1684px;top:1046px" width="22" height="18" viewBox="0 0 22 18"><path d="M1 6H4.5L9.5 1.5V16.5L4.5 12H1Z" stroke="#E8E2E0" stroke-width="1.1" fill="none"/><path d="M12.5 7A3 3 0 0 1 12.5 11" stroke="#E8E2E0" stroke-width="1.1" fill="none"/><path d="M15.5 4A7 7 0 0 1 15.5 14" stroke="#9C8C8A" stroke-width="1.1" fill="none"/><path d="M18.5 1.5A11 11 0 0 1 18.5 16.5" stroke="#7C6C6A" stroke-width="1.1" fill="none"/></svg>
<div class="a" style="left:1719px;top:1045px;font-size:14.6px;line-height:20px;color:#fff;white-space:nowrap">РУС</div>
<div class="a" style="left:1780px;top:1034px;font-size:14.3px;line-height:20px;color:#fff;white-space:nowrap">23:48</div>
<div class="a" style="left:1763px;top:1057px;font-size:14.3px;line-height:20px;color:#fff;white-space:nowrap">21.10.2025</div>
<svg class="a" style="left:1855px;top:1044px" width="22" height="22" viewBox="0 0 22 22"><path d="M1 1H21V17H13.5L11 19.5L8.5 17H1Z" fill="#fff"/><path d="M5 6H17M5 9.5H17M5 13H13" stroke="#3A2220" stroke-width="1.2"/></svg>
<div class="a" style="left:1902px;top:1032px;width:18px;height:47px;border:1px solid #6A5654;border-right:none;background:linear-gradient(160deg,#5A4442,#2A1A18 40%)"></div>

</body></html>
